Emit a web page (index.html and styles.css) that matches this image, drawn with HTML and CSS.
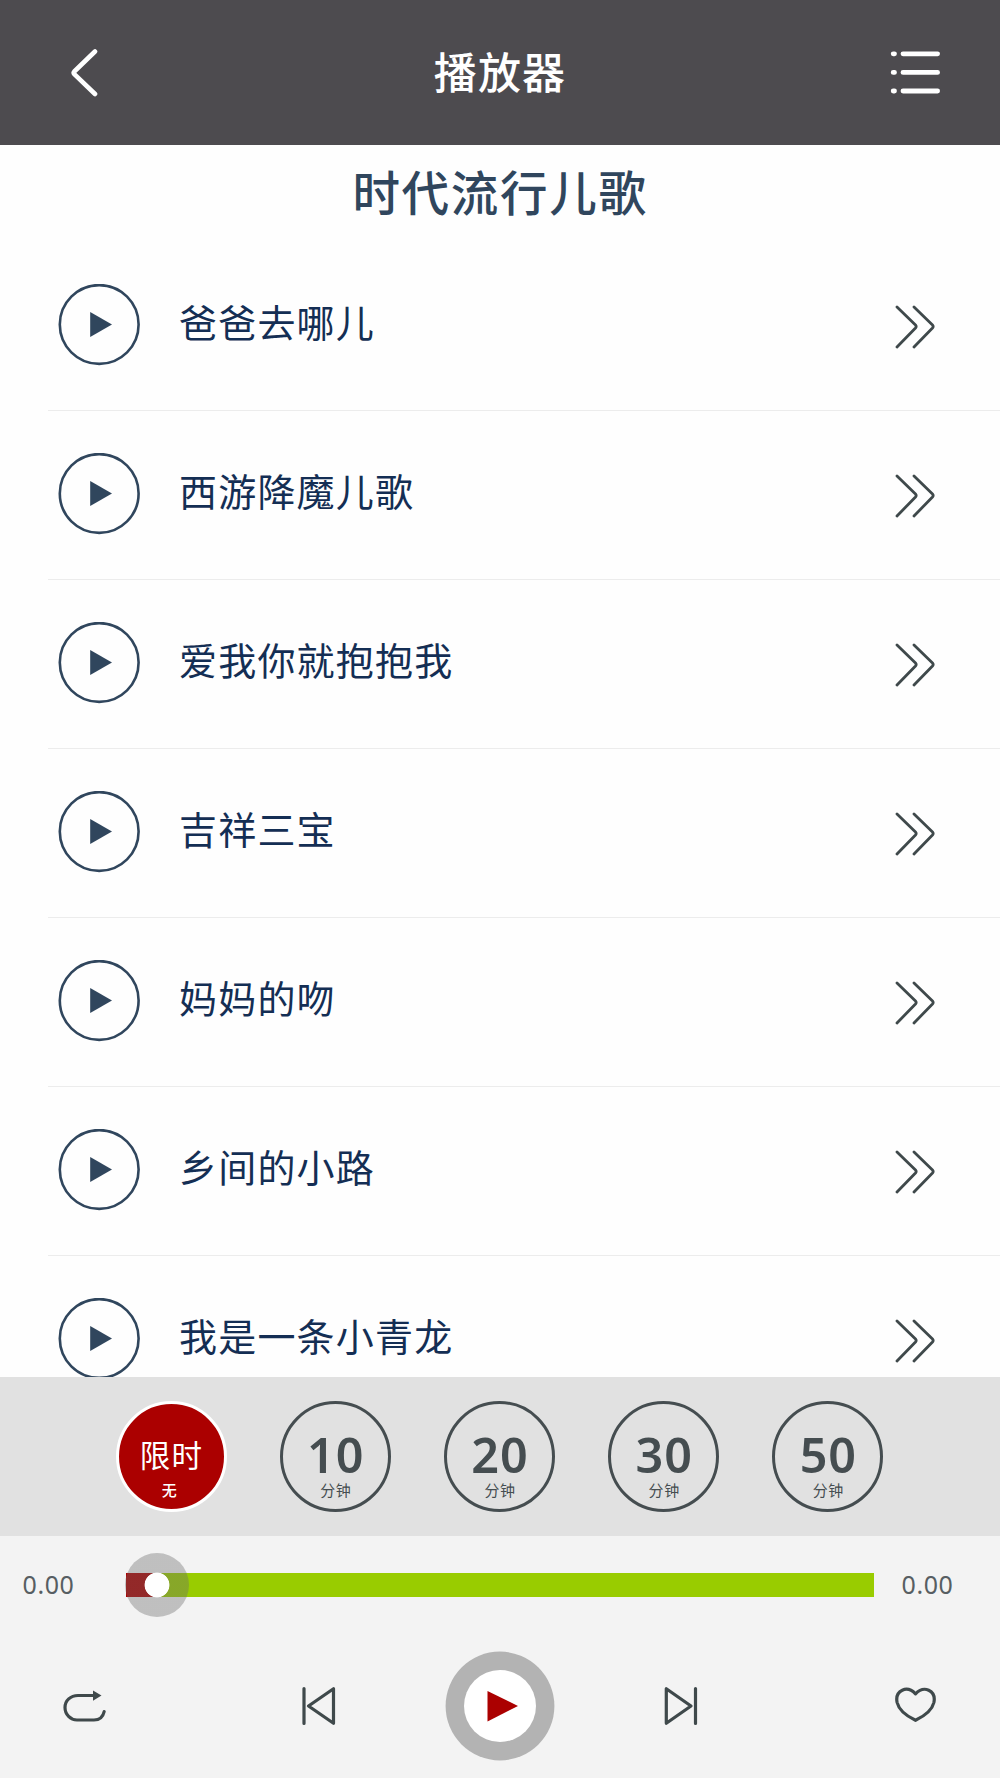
FILE: index.html
```html
<!DOCTYPE html>
<html lang="zh-CN">
<head>
<meta charset="utf-8">
<title>播放器</title>
<link rel="stylesheet" href="styles.css">
</head>
<body>
<svg class="sprite" width="0" height="0" aria-hidden="true">
  <symbol id="play" viewBox="0 0 82 82"><circle cx="41.200" cy="40.500" r="39.400" fill="none" stroke="#30465d" stroke-width="2.600"/><path d="M32.200 28v25L54 40.500z" fill="#30465d"/></symbol>
  <symbol id="more" viewBox="0 0 40 44"><path d="M2 2l18.500 18q1.300 1.500 0 3L2 42M19 2l18.500 18q1.300 1.500 0 3L19 42" fill="none" stroke="#3f494b" stroke-width="2.800" stroke-linecap="round" stroke-linejoin="round"/></symbol>
</svg>
<div class="app">
  <header class="bar">
    <svg class="back" width="30" height="50" viewBox="0 0 30 50"><path d="M25 3.500L4.300 23.500q-1.200 1.300 0 2.600L25 46" fill="none" stroke="#fff" stroke-width="4.600" stroke-linecap="round" stroke-linejoin="round"/></svg>
    <h1 class="bar-title">播放器</h1>
    <svg class="menu" width="52" height="44" viewBox="0 0 52 44" stroke="#fff" stroke-width="4.800" stroke-linecap="round"><path d="M3.200 3.800h1.300M13 3.800h34.600M3.200 22.400h1.300M13 22.400h34.600M3.200 41h1.300M13 41h34.600"/></svg>
  </header>
  <main class="list">
    <h2 class="album">时代流行儿歌</h2>
    <ul class="songs">
      <li class="song"><svg class="play"><use href="#play"/></svg><span class="name">爸爸去哪儿</span><svg class="more"><use href="#more"/></svg></li>
      <li class="song"><svg class="play"><use href="#play"/></svg><span class="name">西游降魔儿歌</span><svg class="more"><use href="#more"/></svg></li>
      <li class="song"><svg class="play"><use href="#play"/></svg><span class="name">爱我你就抱抱我</span><svg class="more"><use href="#more"/></svg></li>
      <li class="song"><svg class="play"><use href="#play"/></svg><span class="name">吉祥三宝</span><svg class="more"><use href="#more"/></svg></li>
      <li class="song"><svg class="play"><use href="#play"/></svg><span class="name">妈妈的吻</span><svg class="more"><use href="#more"/></svg></li>
      <li class="song"><svg class="play"><use href="#play"/></svg><span class="name">乡间的小路</span><svg class="more"><use href="#more"/></svg></li>
      <li class="song"><svg class="play"><use href="#play"/></svg><span class="name">我是一条小青龙</span><svg class="more"><use href="#more"/></svg></li>
    </ul>
  </main>
  <section class="timers">
    <div class="timer active"><span class="value">限时</span><span class="unit">无</span></div>
    <div class="timer"><span class="value">10</span><span class="unit">分钟</span></div>
    <div class="timer"><span class="value">20</span><span class="unit">分钟</span></div>
    <div class="timer"><span class="value">30</span><span class="unit">分钟</span></div>
    <div class="timer"><span class="value">50</span><span class="unit">分钟</span></div>
  </section>
  <section class="progress">
    <span class="time">0.00</span>
    <div class="track"><div class="played"></div><div class="knob"></div></div>
    <span class="time">0.00</span>
  </section>
  <footer class="controls">
    <svg class="repeat" width="44" height="34" viewBox="0 0 44 34"><path d="M31 5.500H15C7.500 5.500 2 10.500 2 17.500S7.500 30 14 30H31C36 30 40 27 41.200 21.500" fill="none" stroke="#3f494b" stroke-width="3.200" stroke-linecap="round"/><path d="M30 .5l8.500 5L30 10.800z" fill="#3f494b"/></svg>
    <svg class="prev" width="34" height="40" viewBox="0 0 34 40" fill="none" stroke="#3f494b" stroke-width="3.200" stroke-linecap="round" stroke-linejoin="round"><path d="M2 2.500v35M31.500 2.700v34.600L6.500 20z"/></svg>
    <svg class="main-play" width="110" height="110" viewBox="0 0 110 110"><circle cx="55" cy="55" r="54.400" fill="#b3b3b3"/><circle cx="55" cy="55" r="36" fill="#fff"/><path d="M42.500 40v30.500L73 55z" fill="#ab0000"/></svg>
    <svg class="next" width="34" height="40" viewBox="0 0 34 40" fill="none" stroke="#3f494b" stroke-width="3.200" stroke-linecap="round" stroke-linejoin="round"><path d="M31.500 2.500v35M2.300 2.700v34.600L27 20z"/></svg>
    <svg class="heart" width="42" height="36" viewBox="0 0 42 36"><path d="M20.500 6.800C16.500 2.700 11.500 1.300 7.300 3.200C2.500 5.500 1.100 10.500 2.100 15.500C4 23.500 12.500 29.500 20.500 33.300C28.500 29.500 37 23.500 38.900 15.500C39.900 10.500 38.500 5.500 33.700 3.200C29.500 1.300 24.500 2.700 20.500 6.800Z" fill="none" stroke="#3f494b" stroke-width="3.200" stroke-linejoin="round"/></svg>
  </footer>
</div>
</body>
</html>
```
FILE: styles.css
```css
* { box-sizing: border-box; }
body { margin: 0; font-family: "Noto Sans CJK SC", sans-serif; }
h1, h2, ul { margin: 0; padding: 0; }
svg { display: block; flex: none; }
.sprite { display: none; }
.app { width: 1000px; height: 1778px; display: flex; flex-direction: column; overflow: hidden; background: #fefefe; }

.bar { height: 145px; flex: none; display: grid; grid-template-columns: 130px 1fr 130px; align-items: center; background: #4d4b4f; color: #fff; }
.back { margin-left: 70px; }
.bar-title { font-size: 43px; font-weight: 500; line-height: 60px; letter-spacing: 1.200px; text-align: center; margin-bottom: 6px; }
.menu { margin-left: 20px; margin-bottom: 1px; }

.list { height: 1232px; flex: none; overflow: hidden; }
.album { height: 97px; line-height: 91px; text-align: center; color: #30465d; font-size: 47.500px; font-weight: 500; letter-spacing: 1.700px; }
.songs { list-style: none; margin-left: 48px; }
.song { height: 169px; display: flex; align-items: center; padding: 0 65px 0 10px; border-bottom: 1px solid #ececec; }
.play { width: 82px; height: 82px; margin-bottom: 3px; }
.name { flex: 1; margin: 0 0 10px 39px; color: #142e54; font-size: 38px; line-height: 56px; letter-spacing: 1.200px; }
.more { width: 40px; height: 44px; margin-top: 1px; }

.timers { height: 159px; flex: none; display: flex; justify-content: center; align-items: center; gap: 53.200px; padding-right: 1px; background: #e1e1e1; color: #454d50; }
.timer { width: 111px; height: 111px; border: 3px solid #454d50; border-radius: 50%; display: flex; flex-direction: column; align-items: center; padding-top: 29px; }
.value { font: 600 48.500px/42px "Noto Sans", "Noto Sans CJK SC", sans-serif; letter-spacing: 1px; padding-left: 1px; }
.unit { font-size: 15px; line-height: 16px; letter-spacing: .6px; margin-top: 7px; padding-left: 1px; }
.active { background: #ab0000; border-color: #fff; color: #fff; }
.active .value { font: 400 30.500px/42px "Noto Sans CJK SC", sans-serif; letter-spacing: 1.300px; padding-left: 1px; }
.active .unit { font-weight: 500; padding: 0 3px 0 0; }

.progress { height: 97px; flex: none; display: flex; align-items: center; background: #f3f3f3; padding-left: 22.500px; }
.time { flex: none; width: 103px; margin-bottom: 1px; color: #575e62; font: 400 25px/36px "Noto Sans", sans-serif; letter-spacing: .6px; }
.track { position: relative; flex: none; width: 748.500px; height: 24px; margin-right: 27.500px; background: #9c0; }
.played { width: 31.500px; height: 24px; background: #ab0000; }
.knob { position: absolute; left: -.5px; top: -20px; width: 64px; height: 64px; border-radius: 50%; background: radial-gradient(circle, #fff 12px, rgba(107, 107, 107, .38) 12.800px); }

.controls { height: 145px; flex: none; display: flex; align-items: center; background: #f3f3f3; padding-left: 62.500px; }
.repeat { margin-top: 3px; }
.prev { margin-left: 195px; }
.main-play { margin-left: 109px; }
.next { margin-left: 109px; }
.heart { margin-left: 197px; margin-bottom: 1px; }
```
